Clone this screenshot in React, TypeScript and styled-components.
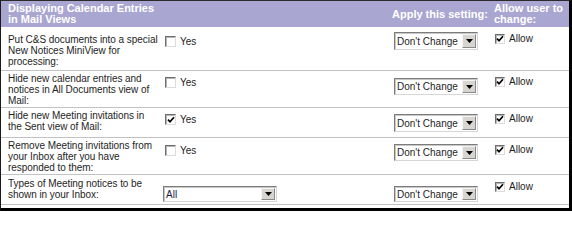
import React from 'react'
import styled, { createGlobalStyle } from 'styled-components'

const GlobalStyle = createGlobalStyle`
  html, body {
    margin: 0;
    padding: 0;
    background: #fff;
  }
  body {
    font-family: 'Liberation Sans', Arial, sans-serif;
  }
`

const COLUMNS = '159px 230px 100px 1fr'

const StyledPanel = styled.div`
  width: 572px;
  height: 211px;
  box-sizing: border-box;
  border-top: 1px solid #2a2a2a;
  border-left: 1px solid #1a1a1a;
  border-right: 3px solid #000;
  border-bottom: 3px solid #000;
  padding-bottom: 3px;
  background: #fff;
  color: #1e1e1e;
  font-size: 10px;
  line-height: 11px;
`

const StyledHeader = styled.div`
  display: grid;
  grid-template-columns: ${COLUMNS};
  height: 26px;
  background: #aaa6d2;
  color: #fff;
  font-weight: bold;
  font-size: 11px;
  line-height: 11px;
`

const HeaderCell = styled.div<{ $left: number }>`
  display: flex;
  align-items: center;
  padding-left: ${(p) => p.$left}px;
  white-space: ${(p) => (p.$left === 2 ? 'nowrap' : 'normal')};
`

const StyledRow = styled.div<{ $h: number }>`
  display: grid;
  grid-template-columns: ${COLUMNS};
  align-items: start;
  height: ${(p) => p.$h}px;
  box-sizing: border-box;
  border-bottom: 1px solid #c2c2c2;
`

const Cell = styled.div<{ $top: number; $left: number }>`
  padding-top: ${(p) => p.$top}px;
  padding-left: ${(p) => p.$left}px;
  display: flex;
  align-items: center;
`

const Label = styled.div<{ $top: number }>`
  padding: ${(p) => p.$top}px 0 0 7px;
  letter-spacing: -0.05px;
  white-space: nowrap;
`

const LabelLine = styled.div`
  height: 11px;
`

const Box = styled.span<{ $size: number }>`
  display: inline-flex;
  align-items: center;
  justify-content: center;
  width: ${(p) => p.$size}px;
  height: ${(p) => p.$size}px;
  box-sizing: border-box;
  background: #fff;
  border-style: solid;
  border-width: 1px;
  border-color: #6e6e6e #dcdcdc #dcdcdc #6e6e6e;
  box-shadow: inset 1px 1px 0 #b4b4b4;
  margin-right: 4px;
  flex: none;
`

const Choice = styled.label`
  display: inline-flex;
  align-items: center;
  color: #1e1e1e;
`

const StyledSelect = styled.div<{ $w: number; $h: number }>`
  display: flex;
  align-items: stretch;
  width: ${(p) => p.$w}px;
  height: ${(p) => p.$h}px;
  box-sizing: border-box;
  border: 1px solid;
  border-color: #7c7c7c #d6d6d6 #d6d6d6 #7c7c7c;
  box-shadow: inset 1px 1px 0 #c8c8c8;
  background: #fff;
`

const SelectText = styled.span<{ $tone: string }>`
  flex: 1;
  display: flex;
  align-items: center;
  padding-left: 2px;
  color: ${(p) => p.$tone};
  white-space: nowrap;
  overflow: hidden;
`

const ArrowButton = styled.span`
  width: 14px;
  margin: 1px;
  box-sizing: border-box;
  display: flex;
  align-items: center;
  justify-content: center;
  background: #d8d5d0;
  border: 1px solid;
  border-color: #f4f4f4 #8a8a8a #8a8a8a #f4f4f4;
`

const Check = () => (
  <svg width='8' height='8' viewBox='0 0 8 8'>
    <path d='M1 3.6 L3 5.8 L7 1.2' stroke='#000' strokeWidth='1.7' fill='none' />
  </svg>
)

const Checkbox = ({ checked, size, text }: { checked: boolean; size: number; text: string }) => (
  <Choice>
    <Box $size={size}>{checked && <Check />}</Box>
    {text}
  </Choice>
)

const Select = ({ value, w, h, tone = '#1e1e1e' }: { value: string; w: number; h: number; tone?: string }) => (
  <StyledSelect $w={w} $h={h}>
    <SelectText $tone={tone}>{value}</SelectText>
    <ArrowButton>
      <svg width='7' height='4' viewBox='0 0 7 4'>
        <path d='M0 0 H7 L3.5 4 Z' fill='#000' />
      </svg>
    </ArrowButton>
  </StyledSelect>
)

interface IRow {
  label: string[]
  h: number
  labelTop: number
  ctrlTop: number
  selectTop: number
  allowTop: number
  yes?: boolean
  all?: boolean
  selectH: number
}

const rows: IRow[] = [
  {
    label: ['Put C&S documents into a special', 'New Notices MiniView for', 'processing:'],
    h: 44, labelTop: 7, ctrlTop: 9, selectTop: 5, allowTop: 6, selectH: 18,
  },
  {
    label: ['Hide new calendar entries and', 'notices in All Documents view of', 'Mail:'],
    h: 37, labelTop: 2, ctrlTop: 6, selectTop: 7, allowTop: 5, selectH: 17,
  },
  {
    label: ['Hide new Meeting invitations in', 'the Sent view of Mail:'],
    h: 30, labelTop: 2, ctrlTop: 6, selectTop: 6, allowTop: 5, yes: true, selectH: 18,
  },
  {
    label: ['Remove Meeting invitations from', 'your Inbox after you have', 'responded to them:'],
    h: 37, labelTop: 2, ctrlTop: 7, selectTop: 6, allowTop: 6, selectH: 17,
  },
  {
    label: ['Types of Meeting notices to be', 'shown in your Inbox:'],
    h: 30, labelTop: 3, ctrlTop: 11, selectTop: 11, allowTop: 6, all: true, selectH: 16,
  },
]

const App = () => {
  return (
    <>
      <GlobalStyle />
      <StyledPanel>
        <StyledHeader>
          <HeaderCell $left={7}>Displaying Calendar Entries in Mail Views</HeaderCell>
          <div />
          <HeaderCell $left={2}>Apply this setting:</HeaderCell>
          <HeaderCell $left={4}>Allow user to change:</HeaderCell>
        </StyledHeader>
        {rows.map((row) => (
          <StyledRow key={row.label[0]} $h={row.h}>
            <Label $top={row.labelTop}>
              {row.label.map((line) => (
                <LabelLine key={line}>{line}</LabelLine>
              ))}
            </Label>
            {row.all ? (
              <Cell $top={row.ctrlTop} $left={3}>
                <Select value='All' w={114} h={row.selectH} tone='#1c1c48' />
              </Cell>
            ) : (
              <Cell $top={row.ctrlTop} $left={5}>
                <Checkbox checked={!!row.yes} size={11} text='Yes' />
              </Cell>
            )}
            <Cell $top={row.selectTop} $left={4}>
              <Select value="Don't Change" w={84} h={row.selectH} />
            </Cell>
            <Cell $top={row.allowTop} $left={5}>
              <Checkbox checked size={10} text='Allow' />
            </Cell>
          </StyledRow>
        ))}
      </StyledPanel>
    </>
  )
}

export default App
